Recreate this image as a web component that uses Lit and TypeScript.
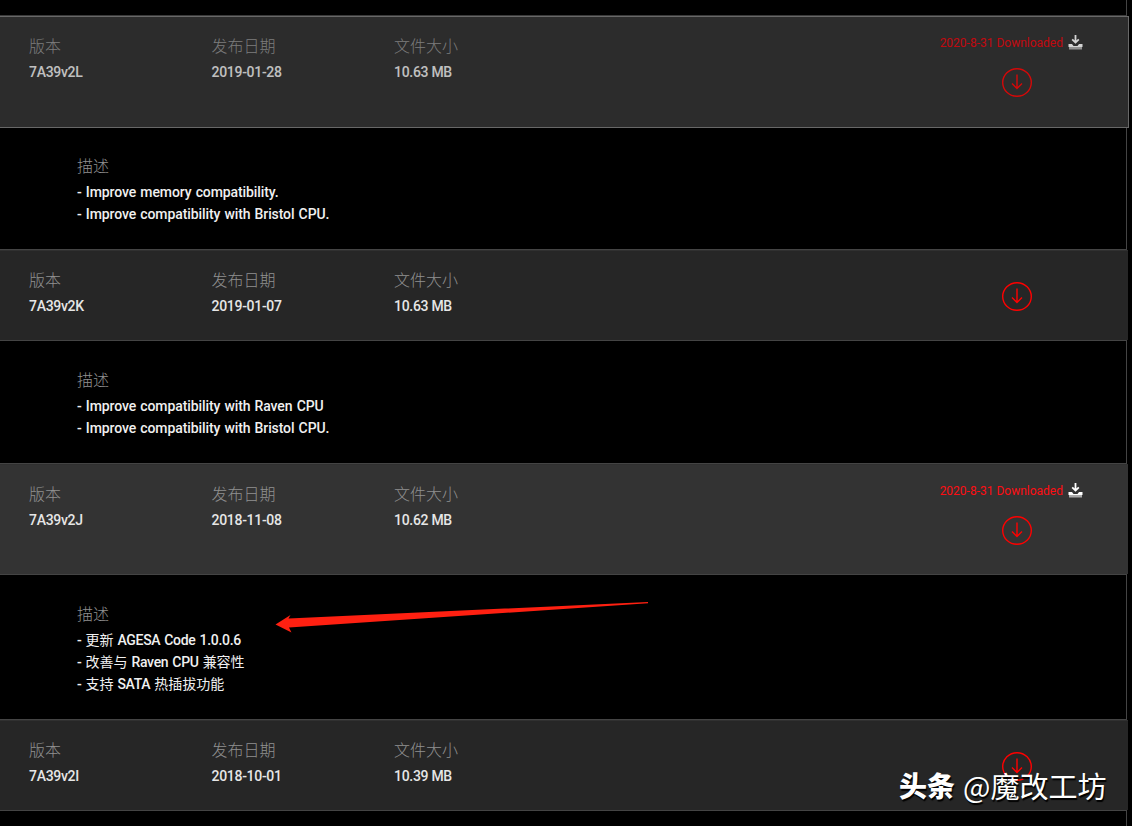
import { LitElement, html, css, nothing } from 'lit';
import { customElement, property } from 'lit/decorators.js';
import { classMap } from 'lit/directives/class-map.js';

interface Release {
  version: string;
  date: string;
  size: string;
  downloaded?: string;
  hovered?: boolean;
  notes: string[];
}

const RELEASES: Release[] = [
  {
    version: '7A39v2L',
    date: '2019-01-28',
    size: '10.63 MB',
    downloaded: '2020-8-31',
    hovered: true,
    notes: ['- Improve memory compatibility.', '- Improve compatibility with Bristol CPU.'],
  },
  {
    version: '7A39v2K',
    date: '2019-01-07',
    size: '10.63 MB',
    notes: ['- Improve compatibility with Raven CPU', '- Improve compatibility with Bristol CPU.'],
  },
  {
    version: '7A39v2J',
    date: '2018-11-08',
    size: '10.62 MB',
    downloaded: '2020-8-31',
    notes: ['- 更新 AGESA Code 1.0.0.6', '- 改善与 Raven CPU 兼容性', '- 支持 SATA 热插拔功能'],
  },
  {
    version: '7A39v2I',
    date: '2018-10-01',
    size: '10.39 MB',
    notes: [],
  },
];

@customElement('release-item')
class ReleaseItem extends LitElement {
  static styles = css`
    :host {
      display: block;
    }

    /* Grey header bar */
    .bar {
      box-sizing: border-box;
      display: grid;
      grid-template-columns: 182.5px 182.5px 1fr 180px;
      width: 1128px;
      height: 90px;
      padding-left: 29px;
      border-top: 1px solid #303030;
      background: #262626;
    }
    .bar.downloaded {
      height: 110px;
      background: #333;
    }
    .bar.hovered {
      width: 1129px;
      height: 112px;
      border: 1px solid #686868;
      border-left: none;
      background: #2c2c2c;
    }
    .hovered .cell,
    .hovered .action {
      opacity: 0.8;
    }

    .cell {
      padding-top: 19px;
    }
    .label {
      height: 23px;
      font-size: 16px;
      line-height: 22px;
      font-weight: 300;
      color: #909090;
    }
    .value {
      font-size: 14px;
      line-height: 26px;
      font-weight: 500;
      letter-spacing: -0.3px;
      color: #e6e6e6;
    }

    /* Download column */
    .action {
      display: flex;
      flex-direction: column;
      align-items: center;
      padding: 31px 42px 0 0;
    }
    .downloaded .action {
      align-items: flex-end;
      padding: 16px 45px 0 0;
    }
    .status {
      display: flex;
      align-items: center;
      gap: 5px;
      height: 20px;
      font-size: 12px;
      color: #ff0d12;
      white-space: nowrap;
    }
    .hovered .status {
      color: #e60008;
    }
    .status svg {
      margin-bottom: 2px;
    }
    .downloaded .circle {
      margin: 15px 51px 0 0;
    }
    svg {
      display: block;
    }

    /* Description panel */
    .notes {
      box-sizing: border-box;
      width: 1127px;
      padding: 29px 0 24px 77px;
      border: solid #444;
      border-width: 1px 1px 1px 0;
      background: #000;
      color: #f0f0f0;
    }
    .notes .label {
      height: 25px;
    }
    .hovered + .notes {
      padding-top: 28px;
      border-top: none;
    }
    .note {
      height: 22px;
      font-size: 14px;
      line-height: 22px;
      font-weight: 500;
      letter-spacing: -0.1px;
      word-spacing: 0.8px;
      white-space: pre;
    }
    .note.mixed {
      letter-spacing: -0.3px;
    }
    .han {
      font-weight: 400;
      letter-spacing: 0;
    }
    .tail {
      box-sizing: border-box;
      width: 1127px;
      height: 16px;
      border: solid #444;
      border-width: 1px 1px 0 0;
    }
  `;

  @property({ attribute: false }) release!: Release;

  // Chinese runs are set lighter than the Latin text beside them
  renderNote(note: string) {
    const runs = note.split(/([\u4e00-\u9fff]+)/);
    return html`<div class=${classMap({ note: true, mixed: runs.length > 1 })}>${runs.map((run, i) => (i % 2 ? html`<span class="han">${run}</span>` : run))}</div>`;
  }

  renderStatus(date: string) {
    return html`
      <div class="status">
        <span>${date} Downloaded</span>
        <svg width="15" height="15" viewBox="0 0 15 15">
          <path d="M7.5 0v7M4.2 4.3L7.5 7.6L10.8 4.3" fill="none" stroke="#fff" stroke-width="1.8" />
          <path d="M.5 9h3.5l1.5 2h4L11 9h3.5v3H.5z" fill="#fff" />
          <path d="M1 12h13v2.5H1z" fill="#aaa" />
        </svg>
      </div>
    `;
  }

  render() {
    const { version, date, size, downloaded, hovered, notes } = this.release;
    return html`
      <div class=${classMap({ bar: true, downloaded: !!downloaded, hovered: !!hovered })}>
        <div class="cell"><div class="label">版本</div><div class="value">${version}</div></div>
        <div class="cell"><div class="label">发布日期</div><div class="value">${date}</div></div>
        <div class="cell"><div class="label">文件大小</div><div class="value">${size}</div></div>
        <div class="action">
          ${downloaded ? this.renderStatus(downloaded) : nothing}
          <svg class="circle" width="30" height="29" viewBox="0 0 30 29" fill="none" stroke="#ff0000">
            <ellipse cx="15" cy="14.5" rx="14.3" ry="13.8" stroke-width="1.4" />
            <path d="M15 6.5v14M10 15.5l5 5l5-5" stroke-width="1.4" />
          </svg>
        </div>
      </div>
      ${notes.length
        ? html`
            <div class="notes">
              <div class="label">描述</div>
              ${notes.map((note) => this.renderNote(note))}
            </div>
          `
        : html`<div class="tail"></div>`}
    `;
  }
}

@customElement('app-root')
class AppRoot extends LitElement {
  static styles = css`
    :host {
      display: block;
      position: relative;
      width: 1132px;
      height: 826px;
      overflow: hidden;
      background: #000;
      font-family: Roboto, 'Noto Sans CJK SC', sans-serif;
    }
    .top {
      box-sizing: border-box;
      width: 1127px;
      height: 16px;
      border-right: 1px solid #444;
      border-bottom: 1px solid #3a3a3a;
    }

    /* Annotation drawn over the list */
    .arrow {
      position: absolute;
      left: 275px;
      top: 598px;
    }
    .watermark {
      position: absolute;
      left: 899px;
      top: 764px;
      display: flex;
      gap: 8px;
      font-family: 'Noto Sans CJK SC', sans-serif;
      font-size: 29px;
      line-height: 42px;
      color: #fff;
      text-shadow: 1px 2px 1px #000;
      white-space: nowrap;
    }
    .brand {
      font-size: 28px;
      font-weight: 900;
    }
  `;

  render() {
    return html`
      <div class="top"></div>
      ${RELEASES.map((release) => html`<release-item .release=${release}></release-item>`)}
      <svg class="arrow" width="376" height="38">
        <path d="M.5 26.5L15.5 17L13.5 20.5L373 4v1.2L14 29.5L16.5 34.5z" fill="#ff2011" />
      </svg>
      <div class="watermark"><span class="brand">头条</span><span>@魔改工坊</span></div>
    `;
  }
}
